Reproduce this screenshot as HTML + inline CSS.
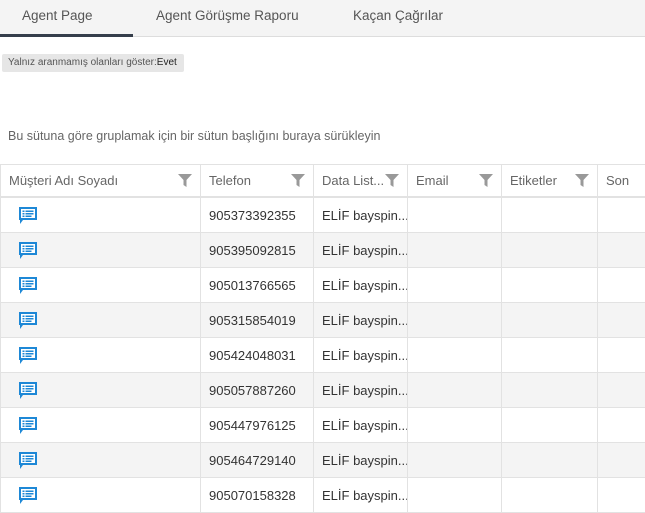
<!DOCTYPE html>
<html><head><meta charset="utf-8"><style>
body{margin:0;width:645px;height:512px;overflow:hidden;background:#fff;font-family:"Liberation Sans",sans-serif;color:#333}
.tabs{position:absolute;left:0;top:0;width:645px;height:36px;background:#f4f4f4;border-bottom:1px solid #ddd}
.tab{position:absolute;top:8px;font-size:13.5px;color:#555}
.ul{position:absolute;left:0;top:34px;width:133px;height:3px;background:#353e4b}
.tag{position:absolute;left:2px;top:54px;width:182px;height:18px;background:#e6e6e6;border-radius:2px;font-size:10px;line-height:18px;padding-left:6px;box-sizing:border-box;color:#555;white-space:nowrap}
.tag b{color:#222;font-weight:normal}
.grp{position:absolute;left:8px;top:129px;font-size:12.5px;color:#666}
table{position:absolute;left:0;top:164px;border-collapse:collapse;table-layout:fixed;width:660px}
td,th{border:1px solid #e2e2e2;height:34px;padding:0 0 0 8px;font-size:13px;text-align:left;white-space:nowrap;overflow:hidden;position:relative}
th{font-weight:normal;color:#666;height:31px;border-bottom:2px solid #e2e2e2}
tr.s td{background:#f4f4f4}
.f{position:absolute;right:8px;top:9px}
td{color:#333}
</style></head><body>
<div class="tabs">
<div class="tab" style="left:22px">Agent Page</div>
<div class="tab" style="left:156px">Agent Görüşme Raporu</div>
<div class="tab" style="left:353px">Kaçan Çağrılar</div>
<div class="ul"></div></div>
<div class="tag">Yalnız aranmamış olanları göster:<b>Evet</b></div>
<div class="grp">Bu sütuna göre gruplamak için bir sütun başlığını buraya sürükleyin</div>
<table>
<colgroup><col style="width:200px"><col style="width:113px"><col style="width:94px"><col style="width:94px"><col style="width:96px"><col style="width:63px"></colgroup>
<tr><th>Müşteri Adı Soyadı<svg class="f" width="14" height="13" viewBox="0 0 14 13"><path d="M0 0H14L8.5 6V13L5.5 11V6Z" fill="#999"/></svg></th><th>Telefon<svg class="f" width="14" height="13" viewBox="0 0 14 13"><path d="M0 0H14L8.5 6V13L5.5 11V6Z" fill="#999"/></svg></th><th>Data List...<svg class="f" width="14" height="13" viewBox="0 0 14 13"><path d="M0 0H14L8.5 6V13L5.5 11V6Z" fill="#999"/></svg></th><th>Email<svg class="f" width="14" height="13" viewBox="0 0 14 13"><path d="M0 0H14L8.5 6V13L5.5 11V6Z" fill="#999"/></svg></th><th>Etiketler<svg class="f" width="14" height="13" viewBox="0 0 14 13"><path d="M0 0H14L8.5 6V13L5.5 11V6Z" fill="#999"/></svg></th><th>Son</th></tr>
</table>
<script>
var nums=["905373392355","905395092815","905013766565","905315854019","905424048031","905057887260","905447976125","905464729140","905070158328"];
var ic='<svg width="20" height="19" viewBox="0 0 20 19" style="margin-left:9px;display:block"><path d="M1 1H19V14H5L2 18V14H1Z" fill="#1e88d6"/><rect x="3" y="3" width="14" height="9" fill="#fff"/><rect x="4.5" y="4.5" width="2" height="1.5" fill="#1e88d6"/><rect x="7.5" y="4.5" width="8" height="1.5" fill="#1e88d6"/><rect x="4.5" y="7" width="2" height="1.5" fill="#1e88d6"/><rect x="7.5" y="7" width="8" height="1.5" fill="#1e88d6"/><rect x="4.5" y="9.5" width="2" height="1.5" fill="#1e88d6"/><rect x="7.5" y="9.5" width="6" height="1.5" fill="#1e88d6"/></svg>';
var t=document.querySelector("table");
nums.forEach(function(n,i){var r=t.insertRow();if(i%2)r.className="s";r.innerHTML="<td>"+ic+"</td><td>"+n+"</td><td>ELİF bayspin...</td><td></td><td></td><td></td>";});
</script>
</body></html>
